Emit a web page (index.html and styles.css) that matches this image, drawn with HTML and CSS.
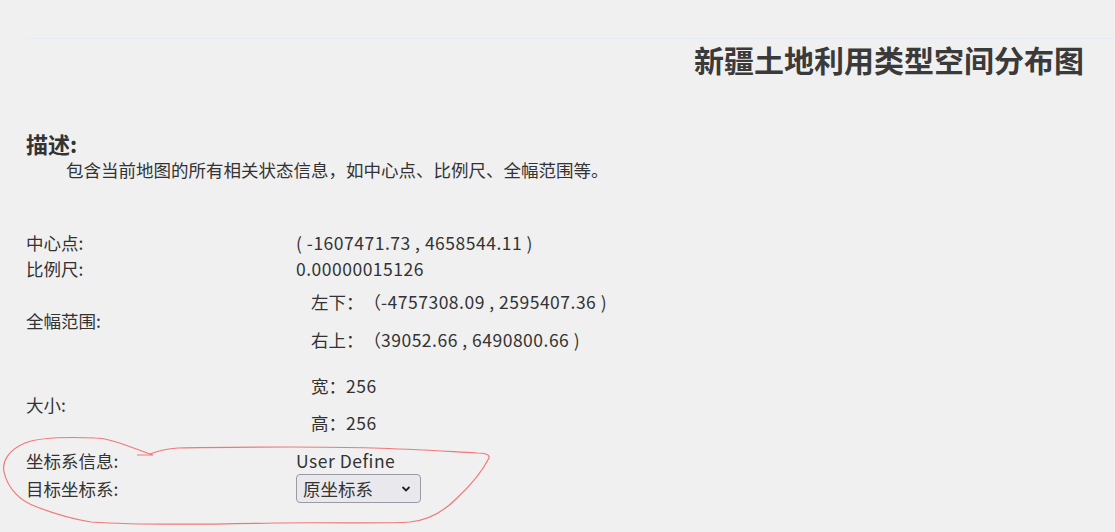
FILE: index.html
```html
<!DOCTYPE html>
<html lang="zh-CN">
<head>
    <meta charset="UTF-8">
    <title>地图状态信息</title>
    <link rel="stylesheet" href="styles.css">
</head>
<body>
    <!-- 标题 -->
    <div class="header">
        <h1 class="map-title">新疆土地利用类型空间分布图</h1>
    </div>

    <!-- 描述 -->
    <div class="desc">
        <h3 class="desc-title">描述:</h3>
        <p class="desc-text">包含当前地图的所有相关状态信息，如中心点、比例尺、全幅范围等。</p>
    </div>

    <!-- 状态信息 -->
    <div class="info">
        <div class="row">
            <span class="label">中心点:</span>
            <span class="value num">( -1607471.73 , 4658544.11 )</span>
        </div>
        <div class="row">
            <span class="label">比例尺:</span>
            <span class="value num">0.00000015126</span>
        </div>
        <div class="row row-extent">
            <span class="label">全幅范围:</span>
            <div class="sub-list">
                <div class="sub-item">左下：（<span class="num">-4757308.09 , 2595407.36 )</span></div>
                <div class="sub-item">右上：（<span class="num">39052.66 , 6490800.66 )</span></div>
            </div>
        </div>
        <div class="row row-size">
            <span class="label">大小:</span>
            <div class="sub-list size-list">
                <div class="sub-item">宽：<span class="num">256</span></div>
                <div class="sub-item">高：<span class="num">256</span></div>
            </div>
        </div>
        <div class="row">
            <span class="label">坐标系信息:</span>
            <span class="value num">User Define</span>
        </div>
        <div class="row">
            <span class="label">目标坐标系:</span>
            <span class="select-wrap">
                <select class="crs-select">
                    <option>原坐标系</option>
                </select>
                <svg class="select-arrow" width="12" height="8" viewBox="0 0 12 8">
                    <path d="M2.5 2 L6 5.5 L9.5 2" fill="none" stroke="#222" stroke-width="1.8"/>
                </svg>
            </span>
        </div>
    </div>

    <!-- 红色手绘标注 -->
    <svg class="annotation" width="500" height="100" viewBox="0 430 500 100">
        <path d="M137 455 L153 455 C130 447 110 438 95 438 C70 437 40 437 25 443 C8 450 2 462 4 472 C8 490 22 502 37 507 C55 514 72 519 91 522 C150 526 220 524 274 523 C330 522 380 524 410 522 C430 520 445 510 456 499 C470 486 482 472 489 458 C490 454 484 453 477 453 C440 451 410 449 373 448 C340 447 315 447 290 447 C250 447 210 447 178 448 C165 449 158 451 150 454"
              fill="none" stroke="#f07878" stroke-width="1.2"/>
    </svg>
</body>
</html>
```

FILE: styles.css
```css
body {
    margin: 0;
    padding: 0;
    background: #f0f0f0;
    color: #333;
    font-family: "Noto Sans CJK SC", "Liberation Sans", sans-serif;
    font-size: 17.5px;
    position: relative;
    min-height: 532px;
    text-spacing-trim: space-all;
}

/* 标题 */
.header {
    margin: 38px 0 0 26px;
    border-top: 1px solid #e6edf6;
    padding-right: 31px;
}

.map-title {
    margin: 0;
    text-align: right;
    font-size: 30px;
    line-height: 40px;
    font-weight: bold;
    color: #3a3a3a;
}

/* 描述 */
.desc {
    margin: 50px 0 0 26px;
}

.desc-title {
    margin: 0;
    font-size: 22px;
    line-height: 28px;
    font-weight: bold;
}

.desc-text {
    margin: 0;
    padding-left: 40px;
    line-height: 26px;
}

/* 状态信息 */
.info {
    margin: 47px 0 0 26px;
}

.row {
    display: grid;
    grid-template-columns: 270px 1fr;
    align-items: center;
    line-height: 26px;
}

.num {
    letter-spacing: 0.5px;
}

.row-extent {
    padding: 7px 0 10px;
}

.row-size {
    padding: 10px 0 12px;
}

.sub-list {
    display: flex;
    flex-direction: column;
    gap: 12px;
    padding-left: 15px;
}

.size-list {
    gap: 11px;
}

.select-wrap {
    position: relative;
    display: inline-block;
    width: 125px;
    height: 29px;
}

.crs-select {
    appearance: none;
    -webkit-appearance: none;
    width: 125px;
    height: 29px;
    padding: 0 0 0 6px;
    border: 1px solid #9a9aa6;
    border-radius: 4px;
    background: #e9e9ed;
    color: #333;
    font-family: inherit;
    font-size: 17.5px;
}

.select-arrow {
    position: absolute;
    right: 9px;
    top: 11px;
    pointer-events: none;
}

/* 手绘圈注 */
.annotation {
    position: absolute;
    left: 0;
    top: 430px;
    pointer-events: none;
}
```
